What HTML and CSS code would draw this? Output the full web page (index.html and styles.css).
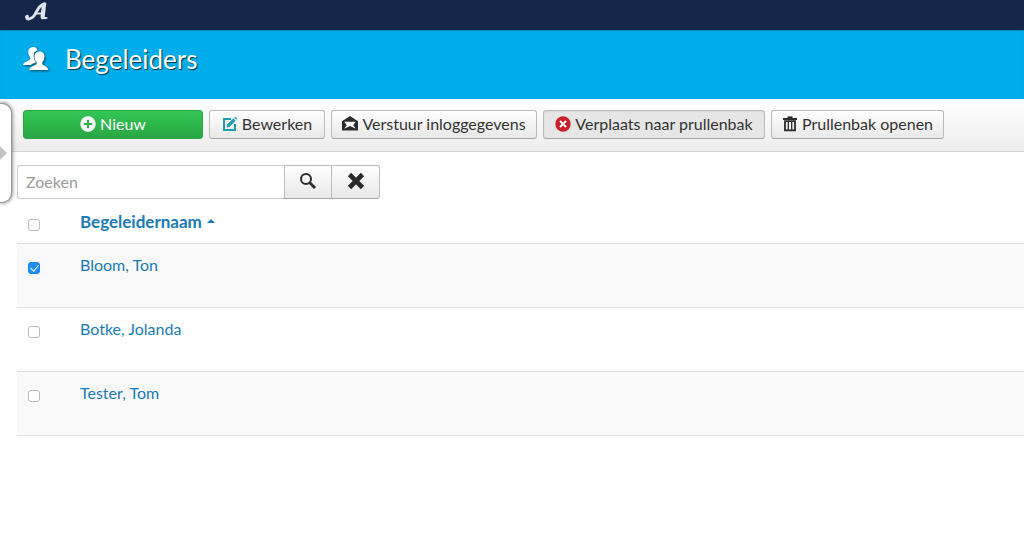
FILE: index.html
```html
<!DOCTYPE html>
<html lang="nl">
<head>
<meta charset="utf-8">
<meta name="viewport" content="width=device-width, initial-scale=1">
<title>Begeleiders</title>
<link rel="stylesheet" href="styles.css">
</head>
<body>
<nav class="navbar" aria-label="Hoofdmenu">
  <a class="brand" href="#" aria-label="Start">
    <svg width="24" height="20" viewBox="0 0 24 20" fill="none" stroke="#dfe4ec" stroke-linecap="round" stroke-linejoin="round"><path d="M2.500 15C3 18 7 17.500 9.800 14.200C13 10 14.500 2.500 21 1.800" stroke-width="2.800"/><path d="M20 2.500L18.600 15" stroke-width="4.200"/><path d="M18 16.200L22.500 16" stroke-width="2"/><path d="M11.500 11.500H18" stroke-width="2"/><circle cx="3.200" cy="14.500" r="1" fill="#dfe4ec" stroke-width="1.500"/></svg>
  </a>
</nav>
<header class="header">
  <svg class="header-icon" width="26" height="24" viewBox="0 0 26 24" fill="#fff"><path d="M10.500 0C6.800 0 5 2.500 5.300 5.500C5.400 8 6.300 9.300 7.200 10.400V12.300C6 14 1 14.500 0 18H7.800C8.800 16.700 11.500 16.200 13 15.200C10.800 12.500 10.200 9 11 6.400C11.600 4.700 13 3.700 14.600 3.400C14 1.200 12.600 0 10.500 0Z"/><path d="M16.500 4.500C13 4.500 11.200 7 11.500 10C11.700 12.500 12.500 14 13.600 15.200V17C12 19 7 19 6 23H25.500C24.500 19 20.500 19 19.300 17V15.200C20.500 14 21.300 12.500 21.500 10C21.800 7 20 4.500 16.500 4.500Z"/></svg>
  <h1 class="title">Begeleiders</h1>
</header>
<div class="workspace">
  <button class="drawer" type="button" aria-label="Zijbalk tonen"><svg width="7" height="14" viewBox="0 0 7 14"><path d="M0 0L7 7L0 14Z" fill="#c4c4c4"/></svg></button>
  <div class="toolbar" role="toolbar" aria-label="Acties">
    <button class="btn btn-new" type="button"><svg width="16" height="16" viewBox="0 0 16 16"><circle cx="8" cy="8" r="7.700" fill="#fff"/><path d="M8 3.700V12.300M3.700 8H12.300" stroke="#2cb44b" stroke-width="2"/></svg>Nieuw</button>
    <button class="btn btn-edit" type="button"><svg width="16" height="16" viewBox="0 0 16 16" fill="none" stroke="#1c9cb5"><path d="M9 3H2V14H13V8" stroke-width="2"/><path d="M6 10L12.500 3.500" stroke-width="3.200"/><path d="M4.500 11.500L5.200 8.600L7.500 10.800Z" fill="#1c9cb5" stroke="none"/><path d="M13.200 2.800L14.200 1.800" stroke-width="3"/></svg>Bewerken</button>
    <button class="btn btn-mail" type="button"><svg width="16" height="16" viewBox="0 0 16 16" fill="#2b2b2b"><path d="M8 0L16 5.200V14.500H0V5.200Z"/><path d="M2.300 5.800H13.700L11.200 9.200L13.800 12.700L8 9.900L2.200 12.700L4.800 9.200Z" fill="#fff"/></svg>Verstuur inloggegevens</button>
    <button class="btn btn-active btn-trash" type="button" aria-pressed="true"><svg width="16" height="16" viewBox="0 0 16 16"><circle cx="8" cy="8" r="7.700" fill="#c8202c"/><path d="M5 5L11 11M11 5L5 11" stroke="#fff" stroke-width="1.900"/></svg>Verplaats naar prullenbak</button>
    <button class="btn btn-open" type="button"><svg width="16" height="16" viewBox="0 0 16 16" fill="none" stroke="#2b2b2b"><path d="M1 3H15" stroke-width="2"/><path d="M5.500 1.200H10.500" stroke-width="1.600"/><path d="M3 5.200H13V14.300H3Z" stroke-width="1.800"/><path d="M6.300 5V14M9.700 5V14" stroke-width="1.300"/></svg>Prullenbak openen</button>
  </div>
  <main class="content">
    <form class="search" role="search">
      <input class="search-input" type="text" placeholder="Zoeken" aria-label="Zoeken">
      <button class="search-btn" type="button" aria-label="Zoek"><svg width="18" height="18" viewBox="0 0 18 18" fill="none" stroke="#2b2b2b"><circle cx="7" cy="7" r="5" stroke-width="2"/><path d="M10.800 10.800L16 16" stroke-width="2.800"/></svg></button>
      <button class="search-btn search-clear" type="button" aria-label="Wissen"><svg width="18" height="18" viewBox="0 0 18 18"><path d="M2.500 2.500L15.500 15.500M15.500 2.500L2.500 15.500" stroke="#2b2b2b" stroke-width="4.600"/></svg></button>
    </form>
    <table class="list">
      <thead>
        <tr><th class="check" scope="col"><input class="box" type="checkbox" aria-label="Alles selecteren"></th><th scope="col"><a href="#">Begeleidernaam<svg class="sort" width="8" height="4" viewBox="0 0 8 4"><path d="M0 4L4 0L8 4Z" fill="#1a7ab8"/></svg></a></th></tr>
      </thead>
      <tbody>
        <tr><td class="check"><input class="box" type="checkbox" checked aria-label="Bloom, Ton"></td><td><a href="#">Bloom, Ton</a></td></tr>
        <tr><td class="check"><input class="box" type="checkbox" aria-label="Botke, Jolanda"></td><td><a href="#">Botke, Jolanda</a></td></tr>
        <tr><td class="check"><input class="box" type="checkbox" aria-label="Tester, Tom"></td><td><a href="#">Tester, Tom</a></td></tr>
      </tbody>
    </table>
  </main>
</div>
</body>
</html>
```
FILE: styles.css
```css
* { box-sizing: border-box; }
body {
  margin: 0;
  background: #fff;
  color: #333;
  font: 16px/20px Lato, "Open Sans", sans-serif;
}
button, input { font: inherit; color: inherit; }
a { color: #1a7ab8; text-decoration: none; }
svg { display: block; flex: none; }

.navbar {
  display: flex;
  height: 30px;
  padding: 2px 24px;
  background: #15264b;
}
.header {
  display: flex;
  align-items: center;
  gap: 16px;
  height: 69px;
  padding: 0 23px 12px;
  background: #00acea;
  box-shadow: inset 0 1px 1px rgba(0, 0, 0, .25);
}
.header-icon { filter: drop-shadow(1px 1px 1px rgba(0, 0, 0, .6)); }
.title {
  margin: 0;
  color: #fff;
  font-size: 26px;
  font-weight: 400;
  line-height: 36px;
  text-shadow: 1px 1px 1px rgba(0, 0, 0, .7);
}
.workspace { position: relative; }
.drawer {
  position: absolute;
  top: 4px;
  left: 0;
  display: flex;
  align-items: center;
  width: 12px;
  height: 100px;
  padding: 0;
  border: 1px solid #999;
  border-left: 0;
  border-radius: 0 10px 10px 0;
  background: #fff;
  box-shadow: 0 0 4px rgba(0, 0, 0, .6);
}
.toolbar {
  display: flex;
  flex-wrap: wrap;
  gap: 6px;
  padding: 11px 23px 12px;
  border-bottom: 1px solid #d5d5d5;
  background: linear-gradient(#fff, #ededed);
}
.btn {
  display: flex;
  align-items: center;
  justify-content: center;
  gap: 4px;
  height: 29px;
  padding: 0 9px 1px;
  border: 1px solid #bbb;
  border-bottom-color: #a6a6a6;
  border-radius: 3px;
  background: linear-gradient(#fff, #e8e8e8);
  white-space: nowrap;
}
.btn-new {
  width: 180px;
  border-color: #2aa646;
  background: linear-gradient(#33c653, #29a745);
  color: #fff;
}
.btn-edit { min-width: 116px; }
.btn-mail { min-width: 206px; }
.btn-trash { min-width: 222px; }
.btn-open { min-width: 173px; }
.btn-active {
  background: #e6e6e6;
  box-shadow: inset 0 1px 2px rgba(0, 0, 0, .06);
}
.content { padding: 13px 0 0 17px; }
.search { display: flex; }
.search-input {
  width: 267px;
  height: 34px;
  padding: 0 8px 2px;
  border: 1px solid #ccc;
  border-right: 0;
  border-radius: 3px 0 0 3px;
  background: #fff;
}
.search-input::placeholder { color: #999; opacity: 1; }
.search-btn {
  display: grid;
  place-items: center;
  width: 48px;
  height: 34px;
  padding: 0 0 2px;
  border: 1px solid #bbb;
  border-bottom-color: #a6a6a6;
  background: linear-gradient(#fff, #e8e8e8);
}
.search-clear {
  border-left: 0;
  border-radius: 0 3px 3px 0;
}
.list {
  width: 100%;
  margin-top: 3px;
  border-collapse: collapse;
}
.list th, .list td {
  padding: 11px 9px;
  border-bottom: 1px solid #ddd;
  text-align: left;
  vertical-align: top;
}
.list th {
  height: 41px;
  padding-top: 10px;
  padding-bottom: 10px;
  font-size: 17px;
}
.list td { height: 64px; }
.list .check { width: 54px; }
.list tbody tr:nth-child(odd) { background: #f9f9f9; }
.sort {
  display: inline-block;
  margin-left: 5px;
  vertical-align: 5px;
}
.box {
  appearance: none;
  display: grid;
  place-items: center;
  width: 12px;
  height: 12px;
  margin: 7px 2px 0;
  border: 1px solid #bbb;
  border-radius: 3px;
  background: #fff;
}
.box:checked {
  border-color: #1583ef;
  background: #1e8df5;
}
.box:checked::before {
  content: "";
  width: 4px;
  height: 7px;
  margin-bottom: 2px;
  border: solid #fff;
  border-width: 0 1px 1px 0;
  transform: rotate(40deg);
}
```
